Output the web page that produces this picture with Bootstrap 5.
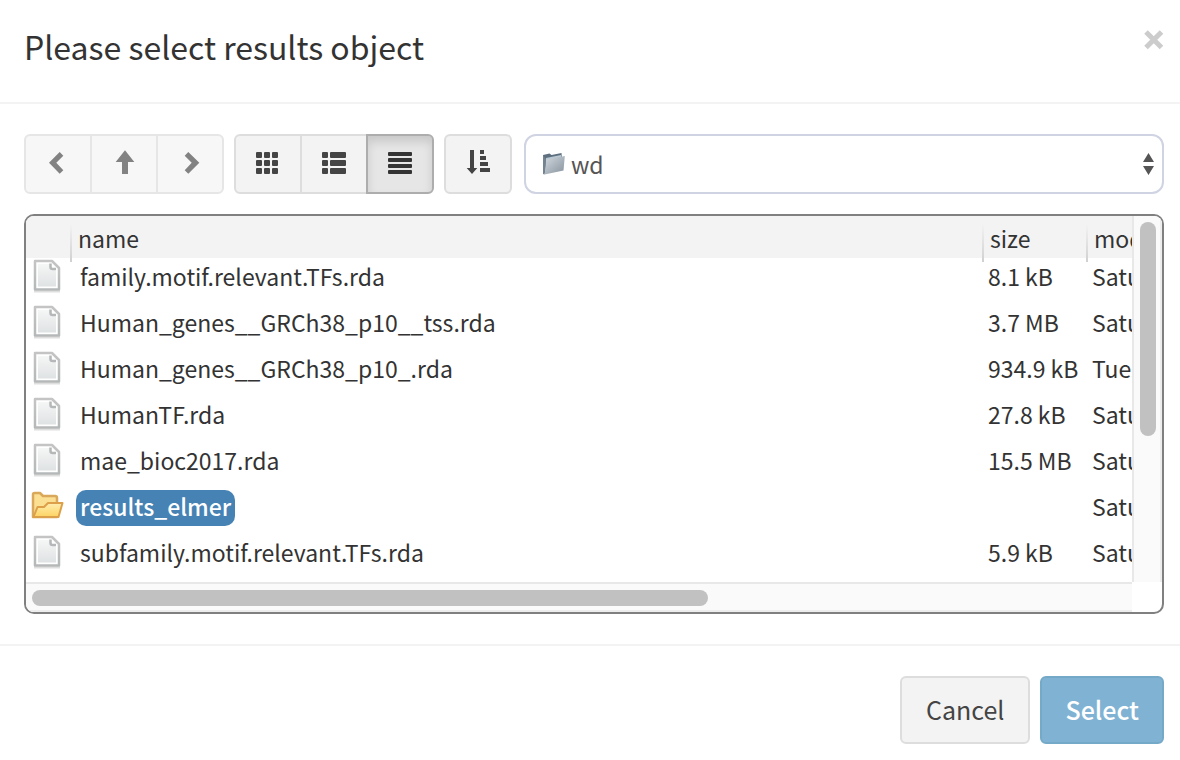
<!DOCTYPE html>
<html lang="en">
<head>
<meta charset="utf-8">
<meta name="viewport" content="width=device-width, initial-scale=1">
<title>Please select results object</title>
<link href="https://cdn.jsdelivr.net/npm/bootstrap@5.3.0/dist/css/bootstrap.min.css" rel="stylesheet">
<style>
body { font-family: "Noto Sans CJK SC", "Source Sans Pro", sans-serif; font-size: 23px; line-height: 32px; color: #333; background: #fff; }
.dialog-head { padding: 22px 16px 32px 24px; border-bottom: 2px solid #f3f3f3; }
.dialog-head h1 { font-size: 32px; line-height: 48px; font-weight: 400; }
.close-btn { width: 22px; height: 36px; color: #ccc; }
.dialog-main { padding: 30px 16px 30px 24px; }
.dialog-foot { padding: 30px 16px 16px; border-top: 2px solid #f3f3f3; gap: 10px; }
.btn-soft { --bs-btn-bg: #f3f3f3; --bs-btn-border-color: #ddd; --bs-btn-color: #444; --bs-btn-hover-bg: #e7e7e7; --bs-btn-hover-border-color: #adadad; --bs-btn-hover-color: #333;
  --bs-btn-active-bg: #e6e6e6; --bs-btn-active-border-color: #adadad; --bs-btn-active-color: #333;
  --bs-btn-disabled-bg: #f7f7f7; --bs-btn-disabled-border-color: #e6e6e6; --bs-btn-disabled-color: #444; --bs-btn-disabled-opacity: 1;
  --bs-btn-border-width: 2px; --bs-btn-border-radius: 6px; }
.toolbar { gap: 10px; }
.tool-btn { width: 68px; height: 60px; --bs-btn-padding-x: 0px; --bs-btn-padding-y: 0px; }
.tool-btn.active { box-shadow: inset 0 6px 10px rgba(0,0,0,.125); }
.tool-btn:disabled svg { opacity: .65; }
.btn-group > .btn.tool-btn { flex: none; }
.btn-group > .btn.tool-btn + .btn.tool-btn { margin-left: -2px; }
.place-wrap { margin-left: 2px; }
.place-select { height: 60px; padding: 0 40px 0 45px; font-size: 23px; color: #555; border: 2px solid #cfd3e2; border-radius: 12px; background-image: none; }
.place-folder { left: 17px; top: 18px; }
.place-arrows { right: 10px; top: 18px; }
.file-box { display: grid; grid-template-columns: minmax(0, 1fr) 30px; grid-template-rows: 366px 30px; border: 2px solid #808080; border-radius: 10px; overflow: hidden; margin-top: 20px; }
.file-table { width: 100%; table-layout: fixed; border-collapse: separate; border-spacing: 0; white-space: nowrap; }
.file-table th, .file-table td { padding: 0; font-weight: 400; }
.file-table th { height: 38px; padding-top: 6px; padding-left: 7px; background: #f3f3f3; box-shadow: 0 4px 0 #f3f3f3; position: relative; }
.file-table th + th::before { content: ""; position: absolute; left: -1px; top: 8px; width: 2px; height: 38px; background: linear-gradient(#f3f3f3, #d0d0d0); z-index: 1; }
.file-table td { height: 46px; padding-left: 5px; padding-bottom: 2px; }
.file-table td:nth-child(2) { padding-left: 9px; }
.file-table td.picked-cell { padding: 2px 0 0 5px; }
.col-a { width: 45px; } .col-c { width: 104px; } .col-d { width: 45px; }
.picked { background: #4682b4; color: #fff; font-weight: 500; padding: 0 4px 4px; border-radius: 10px; display: table; }
.track-v { border-left: 2px solid #e8e8e8; border-right: 2px solid #ededed; background: #fafafa; padding: 6px 4px 0 6px; }
.track-h { border-top: 2px solid #e8e8e8; border-bottom: 2px solid #ededed; background: #fafafa; padding: 6px 6px 0; }
.thumb { background: #c1c1c1; border-radius: 8px; }
.track-v .thumb { height: 214px; width: 16px; }
.track-h .thumb { width: 61.8%; height: 16px; }
.foot-btn { font-size: 25px; line-height: 36px; padding: 13px 23px 15px; --bs-btn-border-width: 2px; --bs-btn-border-radius: 6px; }
.foot-btn.btn-soft { padding-left: 24px; padding-right: 24px; }
.btn-pick { --bs-btn-color: #fff; --bs-btn-bg: #80b3d3; --bs-btn-border-color: #75a9c8; --bs-btn-hover-color: #fff; --bs-btn-hover-bg: #6ca4c7; --bs-btn-hover-border-color: #5e98bc; font-weight: 500; }
</style>
</head>
<body>
<svg class="position-absolute" width="0" height="0" aria-hidden="true">
  <defs>
    <linearGradient id="paper" x2="0" y2="1"><stop offset="0" stop-color="#f5f6f6"/><stop offset="1" stop-color="#dfe2e3"/></linearGradient>
    <linearGradient id="edge" x2="0" y2="1"><stop offset="0" stop-color="#c4c4c4"/><stop offset="1" stop-color="#b5b8b8"/></linearGradient>
    <linearGradient id="gold" x2="0" y2="1"><stop offset="0" stop-color="#ffeeb0"/><stop offset="1" stop-color="#fdd363"/></linearGradient>
    <linearGradient id="steel" x2="1" y2="1"><stop offset="0" stop-color="#d3dae0"/><stop offset="1" stop-color="#85919c"/></linearGradient>
  </defs>
  <symbol id="file" viewBox="0 0 28 34">
    <path d="M1 32.500H27" stroke="#dedede" stroke-width="2"/>
    <path d="M2 2H19L26 9V30.500H2Z" fill="#fff" stroke="url(#edge)" stroke-width="2.500" stroke-linejoin="round"/>
    <path d="M5 5H16L23 12V27.500H5Z" fill="url(#paper)"/>
    <path d="M17.500 4.500V8Q17.500 10 19.500 10H23" fill="#fff" stroke="#b5b8b8" stroke-width="2.500"/>
  </symbol>
</svg>

<header class="dialog-head d-flex justify-content-between align-items-start">
  <h1 class="m-0">Please select results object</h1>
  <button type="button" class="close-btn btn p-0 border-0 d-flex align-items-center justify-content-end" aria-label="Close">
    <svg width="20" height="20" viewBox="0 0 20 20" fill="none" stroke="currentColor" stroke-width="5"><path d="M2 2 17.500 17.500M17.500 2 2 17.500"/></svg>
  </button>
</header>

<main class="dialog-main">
  <div class="toolbar d-flex">
    <div class="btn-group flex-shrink-0" role="group" aria-label="History">
      <button type="button" class="btn btn-soft tool-btn" disabled aria-label="Back"><svg width="28" height="28" fill="currentColor"><path d="M5 12.700 15.700 2 19.300 5.700 12.300 12.700 19.300 20.300 15.700 23.700Z"/></svg></button>
      <button type="button" class="btn btn-soft tool-btn" disabled aria-label="Up"><svg width="28" height="28" fill="currentColor"><path d="M15 .300 24.300 12H18V24H12V12H5.700Z"/></svg></button>
      <button type="button" class="btn btn-soft tool-btn" disabled aria-label="Forward"><svg width="28" height="28" fill="currentColor"><path d="M23.300 12.700 12.300 2 8.700 5.700 15.700 12.700 8.700 20.300 12.300 23.700Z"/></svg></button>
    </div>
    <div class="btn-group flex-shrink-0" role="group" aria-label="View">
      <button type="button" class="btn btn-soft tool-btn" aria-label="Icons"><svg width="28" height="28" fill="currentColor"><rect x="2" y="2" width="6" height="6" rx="1"/><rect x="10" y="2" width="6" height="6" rx="1"/><rect x="18" y="2" width="6" height="6" rx="1"/><rect x="2" y="10" width="6" height="6" rx="1"/><rect x="10" y="10" width="6" height="6" rx="1"/><rect x="18" y="10" width="6" height="6" rx="1"/><rect x="2" y="18" width="6" height="6" rx="1"/><rect x="10" y="18" width="6" height="6" rx="1"/><rect x="18" y="18" width="6" height="6" rx="1"/></svg></button>
      <button type="button" class="btn btn-soft tool-btn" aria-label="List"><svg width="28" height="28" fill="currentColor"><rect x="2" y="2" width="6" height="6" rx="1"/><rect x="10" y="2" width="16" height="6" rx="1"/><rect x="2" y="10" width="6" height="6" rx="1"/><rect x="10" y="10" width="16" height="6" rx="1"/><rect x="2" y="18" width="6" height="6" rx="1"/><rect x="10" y="18" width="16" height="6" rx="1"/></svg></button>
      <button type="button" class="btn btn-soft tool-btn active" aria-pressed="true" aria-label="Detail"><svg width="28" height="28" fill="currentColor"><rect x="2" y="2" width="24" height="4" rx="1"/><rect x="2" y="8" width="24" height="4" rx="1"/><rect x="2" y="14" width="24" height="4" rx="1"/><rect x="2" y="20" width="24" height="4" rx="1"/></svg></button>
    </div>
    <button type="button" class="btn btn-soft tool-btn flex-shrink-0" aria-label="Sort"><svg width="28" height="28" fill="currentColor"><path d="M6 0H10V18H13.300L8 24 2.700 18H6ZM16 0H20V4H16ZM16 6H22V10H16ZM16 12H24V16H16ZM16 18H26V22H16Z"/></svg></button>
    <div class="place-wrap position-relative flex-grow-1">
      <select class="form-select place-select" aria-label="Folder"><option>wd</option></select>
      <svg class="place-folder position-absolute pe-none" width="26" height="24" viewBox="0 0 26 24">
        <path d="M2 3 8.500 1.500 10.500 3 20.500 1 21 8 3 21.500Z" fill="#5e7080"/>
        <path d="M5 6 20 3V6L5 9Z" fill="#b9c8d3"/>
        <path d="M5 7.500 23.800 4 22.500 18.500 3.500 22.500Z" fill="url(#steel)"/>
        <path d="M2 3V22L3.500 22.500 5 7.500" fill="#74838f"/>
      </svg>
      <svg class="place-arrows position-absolute pe-none" width="11" height="24" viewBox="0 0 11 24" fill="#555"><path d="M0 10 5.500 1 11 10ZM0 14H11L5.500 23Z"/></svg>
    </div>
  </div>

  <div class="file-box">
    <div class="overflow-hidden">
      <table class="file-table">
        <colgroup><col class="col-a"><col><col class="col-c"><col class="col-d"></colgroup>
        <thead><tr><th aria-label="type"></th><th>name</th><th>size</th><th>modified</th></tr></thead>
        <tbody>
          <tr><td><svg class="d-block" width="32" height="34"><use href="#file" width="32" height="34"/></svg></td><td>family.motif.relevant.TFs.rda</td><td>8.1 kB</td><td>Saturday</td></tr>
          <tr><td><svg class="d-block" width="32" height="34"><use href="#file" width="32" height="34"/></svg></td><td>Human_genes__GRCh38_p10__tss.rda</td><td>3.7 MB</td><td>Saturday</td></tr>
          <tr><td><svg class="d-block" width="32" height="34"><use href="#file" width="32" height="34"/></svg></td><td>Human_genes__GRCh38_p10_.rda</td><td>934.9 kB</td><td>Tuesday</td></tr>
          <tr><td><svg class="d-block" width="32" height="34"><use href="#file" width="32" height="34"/></svg></td><td>HumanTF.rda</td><td>27.8 kB</td><td>Saturday</td></tr>
          <tr><td><svg class="d-block" width="32" height="34"><use href="#file" width="32" height="34"/></svg></td><td>mae_bioc2017.rda</td><td>15.5 MB</td><td>Saturday</td></tr>
          <tr><td><svg class="d-block" width="33" height="34" viewBox="0 0 33 34">
            <path d="M2 28V5.500Q2 4 3.500 4H9L12 7H24Q26 7 26 9V28Z" fill="#fbdf93" stroke="#d9a85a" stroke-width="2.500" stroke-linejoin="round"/>
            <path d="M2.500 28 6.500 18H13L17 14H31.500L27.500 28Z" fill="url(#gold)" stroke="#dca04a" stroke-width="2" stroke-linejoin="round"/>
          </svg></td><td class="picked-cell"><span class="picked">results_elmer</span></td><td></td><td>Saturday</td></tr>
          <tr><td><svg class="d-block" width="32" height="34"><use href="#file" width="32" height="34"/></svg></td><td>subfamily.motif.relevant.TFs.rda</td><td>5.9 kB</td><td>Saturday</td></tr>
        </tbody>
      </table>
    </div>
    <div class="track-v"><div class="thumb"></div></div>
    <div class="track-h"><div class="thumb"></div></div>
  </div>
</main>

<footer class="dialog-foot d-flex justify-content-end">
  <button type="button" class="btn btn-soft foot-btn">Cancel</button>
  <button type="button" class="btn btn-pick foot-btn">Select</button>
</footer>
<script src="https://cdn.jsdelivr.net/npm/bootstrap@5.3.0/dist/js/bootstrap.bundle.min.js"></script>
</body>
</html>
